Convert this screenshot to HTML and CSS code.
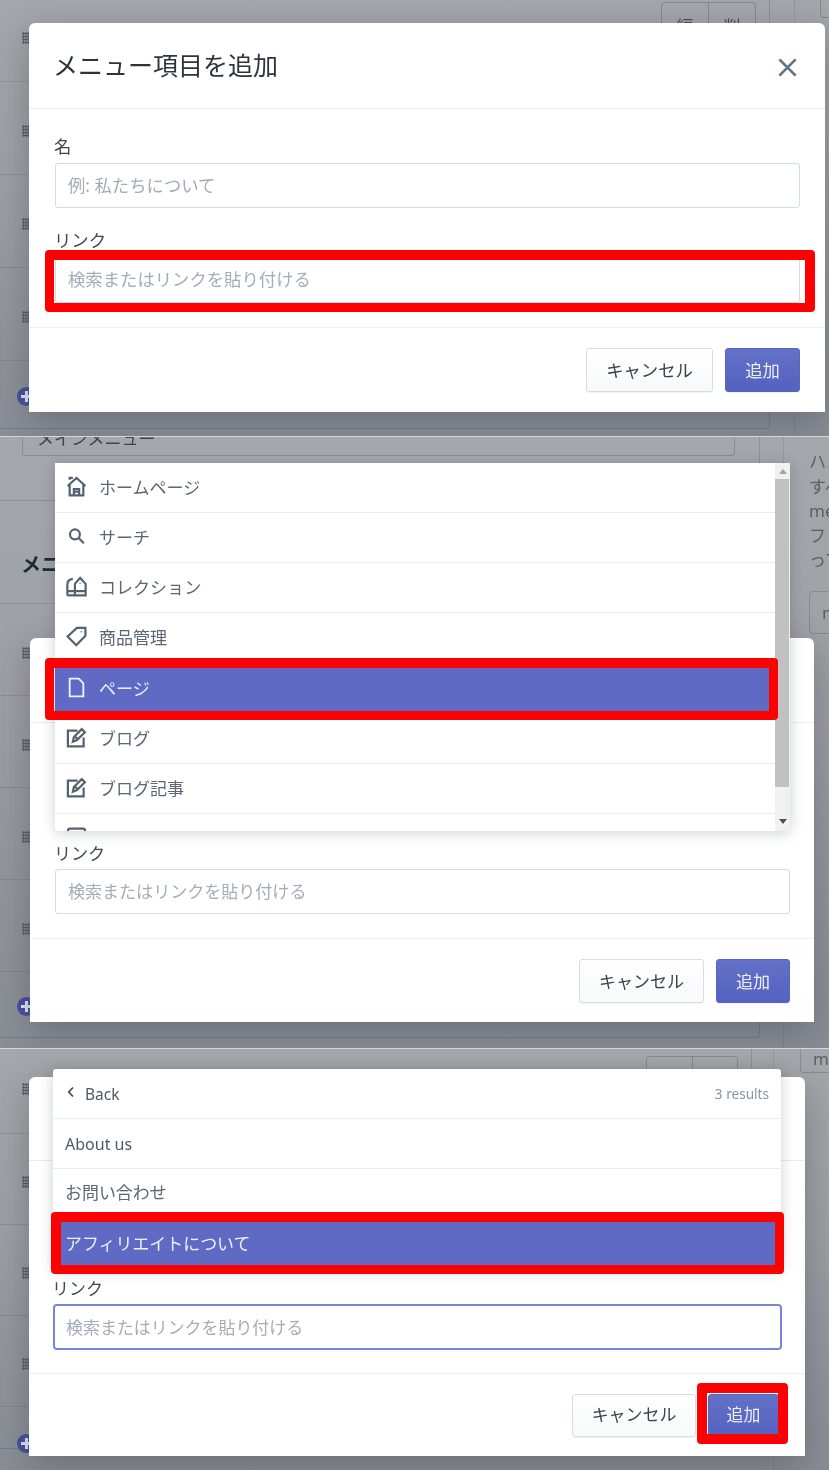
FILE: index.html
```html
<!DOCTYPE html>
<html lang="ja">
<head>
<meta charset="utf-8">
<title>メニュー項目を追加</title>
<link rel="stylesheet" href="styles.css">
</head>
<body>
<svg class="defs" width="0" height="0" aria-hidden="true">
  <symbol id="i-home" viewBox="0 0 20 20"><path d="M1.500 9.500 10 1.800l8.500 7.700M3.500 3.500V1.800h3M3.500 8v10.500h13V8M7.500 18.500v-6h5v6M7.500 15h5"/></symbol>
  <symbol id="i-search" viewBox="0 0 20 20"><circle cx="8.500" cy="8" r="4.700"/><path d="m12 11.500 5 5" class="thick"/></symbol>
  <symbol id="i-coll" viewBox="0 0 20 20"><path d="M1.300 18.500V8C1.300 5 3.500 3.200 6.500 2.800M8.500 18.500V7.500l5-5.700 5.200 5.700v11zM1.300 14.500h17.400M1.300 18.500h17.400M13.500 6.500v.7"/></symbol>
  <symbol id="i-tag" viewBox="0 0 20 20"><path d="M18.500 1.800v7.600l-8.700 8.900L1.500 10l8.900-8.200zM14.600 5.300v.6"/></symbol>
  <symbol id="i-page" viewBox="0 0 20 20"><path d="M3.500 1.500h8.700l4.300 4.600v12.400h-13z"/></symbol>
  <symbol id="i-blog" viewBox="0 0 20 20"><path d="M11 3.500H1.800v15h15V10M6.500 14l1-4.500L15 2l3 3-7.500 7.500zM8.500 9l2.500 2.500"/></symbol>
  <symbol id="i-box" viewBox="0 0 20 20"><rect x="2" y="1.500" width="16" height="17" rx="1.500"/></symbol>
</svg>

<section class="panel panel-a">
  <div class="bg">
    <div class="card card-a">
      <div class="row row-first"><span class="grip"></span><span class="spacer"></span><span class="btn-group"><span>編集</span><span>削除</span></span></div>
      <div class="row"><span class="grip"></span></div>
      <div class="row"><span class="grip"></span></div>
      <div class="row"><span class="grip"></span></div>
      <div class="row row-add"><span class="plus"></span></div>
    </div>
    <aside class="side side-a"><span class="side-box"></span></aside>
  </div>
  <div class="modal">
    <header class="modal-head"><h2>メニュー項目を追加</h2>
      <svg class="close" viewBox="0 0 20 20"><path d="M3.500 3.500l13 13M16.500 3.500l-13 13"/></svg></header>
    <div class="modal-body">
      <label>名</label><div class="input">例: 私たちについて</div>
      <label class="second">リンク</label><div class="input tall">検索またはリンクを貼り付ける</div>
    </div>
    <footer class="modal-foot"><span class="btn">キャンセル</span><span class="btn primary">追加</span></footer>
  </div>
  <div class="mark mark-a"></div>
</section>

<section class="panel panel-b">
  <div class="bg">
    <div class="main">
      <div class="card strip"><div class="ghost-input">メインメニュー</div></div>
      <div class="card card-b">
        <h3>メニュー項目</h3>
        <div class="row"><span class="grip"></span></div>
        <div class="row"><span class="grip"></span></div>
        <div class="row"><span class="grip"></span></div>
        <div class="row"><span class="grip"></span></div>
        <div class="row row-add"><span class="plus"></span></div>
      </div>
    </div>
    <aside class="side side-b">
      <p>ハンドル</p><p>すべて</p><p>menu</p><p>フッター</p><p>って</p>
      <span class="side-btn">main</span>
    </aside>
  </div>
  <div class="modal">
    <header class="modal-head"><h2 class="covered">メニュー項目を追加</h2></header>
    <div class="modal-body">
      <label class="covered">名</label><div class="input covered">例: 私たちについて</div>
      <label class="second">リンク</label><div class="input near">検索またはリンクを貼り付ける</div>
    </div>
    <footer class="modal-foot"><span class="btn">キャンセル</span><span class="btn primary">追加</span></footer>
  </div>
  <div class="dropdown">
    <ul class="list">
      <li><svg class="ico"><use href="#i-home"/></svg>ホームページ</li>
      <li><svg class="ico"><use href="#i-search"/></svg>サーチ</li>
      <li><svg class="ico"><use href="#i-coll"/></svg>コレクション</li>
      <li><svg class="ico"><use href="#i-tag"/></svg>商品管理</li>
      <li class="active"><svg class="ico"><use href="#i-page"/></svg>ページ</li>
      <li><svg class="ico"><use href="#i-blog"/></svg>ブログ</li>
      <li><svg class="ico"><use href="#i-blog"/></svg>ブログ記事</li>
      <li><svg class="ico"><use href="#i-box"/></svg></li>
    </ul>
    <div class="scrollbar"><span class="arrow up"></span><span class="thumb"></span><span class="arrow down"></span></div>
  </div>
  <div class="mark mark-b"></div>
</section>

<section class="panel panel-c">
  <div class="bg">
    <div class="card card-c">
      <div class="row row-first"><span class="grip"></span><span class="spacer"></span><span class="btn-group"><span></span><span></span></span></div>
      <div class="row"><span class="grip"></span></div>
      <div class="row"><span class="grip"></span></div>
      <div class="row"><span class="grip"></span></div>
      <div class="row row-add"><span class="plus"></span></div>
    </div>
    <aside class="side side-c"><span class="side-btn">main</span></aside>
  </div>
  <div class="modal">
    <header class="modal-head"><h2 class="covered">メニュー項目を追加</h2></header>
    <div class="modal-body">
      <label class="covered">名</label><div class="input covered">例: 私たちについて</div>
      <label class="second">リンク</label><div class="input tall focus">検索またはリンクを貼り付ける</div>
    </div>
    <footer class="modal-foot"><span class="btn">キャンセル</span><span class="btn primary">追加</span></footer>
  </div>
  <div class="dropdown">
    <ul class="list">
      <li class="back"><svg class="chev" viewBox="0 0 10 14"><path d="M7 2.500 2.800 7 7 11.500"/></svg><span>Back</span><em>3 results</em></li>
      <li class="latin">About us</li>
      <li class="contact">お問い合わせ</li>
      <li class="active">アフィリエイトについて</li>
    </ul>
  </div>
  <div class="mark mark-c1"></div>
  <div class="mark mark-c2"></div>
</section>
</body>
</html>
```
FILE: styles.css
```css
* { box-sizing: border-box; }
html, body { margin: 0; padding: 0; }
body {
  width: 829px;
  height: 1470px;
  overflow: hidden;
  background: #8b8f96;
  font-family: "Noto Sans", "Noto Sans CJK JP", sans-serif;
  color: #212b36;
  filter: blur(.35px);
}
.defs { position: absolute; }
.covered { visibility: hidden; }

/* panels: three stacked captures */
.panel {
  position: relative;
  overflow: hidden;
  font-size: var(--fs);
  background: linear-gradient(180deg, #a4a7ab 0%, #9c9fa4 45%, #898d94 100%);
}
.panel-a { height: 436px; --fs: 17.35px; }
.panel-b { height: 612px; --fs: 17.05px; border-top: 1px solid #d3d5d8; }
.panel-c { height: 422px; --fs: 16.95px; border-top: 1px solid #d3d5d8; }

/* dimmed page behind the dialogs */
.bg { display: flex; align-items: flex-start; }
.card { border: 1px solid rgba(60, 66, 74, .22); border-left: 0; border-top: 0; border-radius: 0 0 4px 0; }
.row {
  display: flex;
  align-items: center;
  height: 93px;
  padding: 6px 0 0 22px;
  border-bottom: 1px solid rgba(60, 66, 74, .16);
}
.row-first { height: 82px; padding: 0 13px 6px 22px; }
.row-add { border-bottom: 0; height: 68px; padding: 2px 0 0 17px; }
.spacer { flex: 1; }
.grip {
  width: 8px;
  height: 12px;
  background: radial-gradient(circle, #5a6169 1.100px, transparent 1.400px) 0 0 / 2.700px 3px;
}
.plus {
  position: relative;
  width: 19px;
  height: 19px;
  border-radius: 50%;
  background: #46519f;
}
.plus::before, .plus::after { content: ""; position: absolute; background: #e3e5f2; }
.plus::before { left: 4px; right: 4px; top: 8px; height: 3px; }
.plus::after { top: 4px; bottom: 4px; left: 8px; width: 3px; }
.btn-group {
  align-self: flex-start;
  display: flex;
  width: 95px;
  height: 56px;
  margin-top: 2px;
  border: 1px solid rgba(60, 66, 74, .3);
  border-radius: 4px;
  font-size: 17px;
  color: #4a5058;
}
.btn-group span { flex: 1; padding: 12px 14px 0; text-align: center; line-height: 24px; }
.btn-group span + span { border-left: 1px solid rgba(60, 66, 74, .3); }

.card-a { width: 770px; height: 429px; }
.side { flex: 1; min-width: 0; overflow: hidden; border-left: 1px solid rgba(60, 66, 74, .14); color: #5a6068; }
.side-a { margin-left: 24px; height: 436px; }
.side-box { display: block; width: 40px; height: 18px; margin-left: 25px; border: 1px solid rgba(60, 66, 74, .3); border-top: 0; border-radius: 0 0 4px 4px; }

.main { width: 760px; }
.strip {
  display: flex;
  flex-direction: column;
  justify-content: flex-end;
  height: 64px;
  overflow: hidden;
  padding: 0 24px 44px 22px;
}
.ghost-input {
  flex: none;
  height: 40px;
  padding: 0 14px;
  line-height: 43px;
  border: 1px solid rgba(60, 66, 74, .25);
  border-radius: 3px;
  font-size: 17px;
  color: #3e444c;
}
.card-b { margin-top: 23px; height: 514px; }
.card-b h3 { margin: 0; height: 80px; padding: 27px 0 0 21px; font-size: 20px; line-height: 28px; border-bottom: 1px solid rgba(60, 66, 74, .16); }
.card-b .row { height: 92px; }
.card-b .row-add { height: 66px; }
.side-b { margin-left: 23px; padding: 13px 0 0 25px; height: 611px; white-space: nowrap; }
.side-b p { margin: 0; font-size: 17px; line-height: 24.500px; }
.side-btn { display: block; width: 60px; height: 43px; padding: 9px 12px; font-size: 17px; border: 1px solid rgba(60, 66, 74, .25); border-radius: 4px; }
.side-b .side-btn { margin-top: 18px; }

.card-c { width: 752px; height: 400px; }
.card-c .row { height: 91px; }
.card-c .row-first { height: 85px; padding-bottom: 4px; }
.card-c .btn-group { width: 92px; margin-top: 7px; }
.card-c .row-add { height: 60px; padding-top: 12px; }
.side-c { margin-left: 21px; height: 422px; padding-left: 26px; }
.side-c .side-btn { height: 24px; padding: 0 12px; line-height: 20px; border-top: 0; border-radius: 0 0 4px 4px; }

/* dialog */
.modal {
  position: absolute;
  display: flex;
  flex-direction: column;
  background: #fff;
  border-radius: 6px 6px 0 0;
  box-shadow: 0 10px 36px rgba(40, 44, 52, .32);
}
.modal-head {
  display: flex;
  align-items: center;
  justify-content: space-between;
  padding: 0 25px;
  border-bottom: 1px solid #e9ecef;
}
.modal-head h2 { margin: 0 0 4px -1px; font-size: 25px; font-weight: 400; color: #2c343d; }
.close { width: 25px; height: 25px; margin-top: 3px; fill: none; stroke: #637381; stroke-width: 2.200; }
.modal-body { padding-left: var(--pad); padding-right: var(--pad-r); }
.modal-body label { display: block; height: 24px; margin-left: -1px; line-height: 24px; color: #3f4953; }
.input {
  display: flex;
  align-items: center;
  height: 45px;
  margin-top: var(--lg);
  padding: 0 12px 2px;
  background: #fff;
  border: 1px solid #d5dbe2;
  border-radius: 3px;
  color: #a3adb8;
}
.input.tall { height: 46px; }
.input.near { margin-top: 3px; }
.input.focus { margin-top: 3px; border: 2px solid #7a84d6; border-radius: 4px; padding: 0 11px 2px; }
.second { margin-top: var(--gap); }
.modal-foot {
  display: flex;
  justify-content: flex-end;
  gap: var(--btn-gap);
  border-top: 1px solid #eef0f2;
}
.btn {
  display: flex;
  align-items: center;
  justify-content: center;
  height: 44px;
  padding-bottom: 2px;
  background: linear-gradient(180deg, #fff, #f8f9fa);
  border: 1px solid #d8dde2;
  border-radius: 3px;
  box-shadow: 0 1px 0 rgba(22, 29, 37, .05);
  color: #3a434c;
}
.btn.primary { border-color: #5664c2; background: linear-gradient(180deg, #6371c7, #5462c0); color: #eceefa; }

.panel-a .modal { left: 29px; top: 23px; width: 796px; height: 389px; --pad: 26px; --pad-r: 25px; --lg: 5px; --gap: 20px; --btn-gap: 12px; }
.panel-a .modal-head { flex: none; height: 86px; }
.panel-a .modal-body { padding-top: 25px; padding-bottom: 24px; }
.panel-a .input.tall { padding-bottom: 4px; }
.panel-a .modal-foot { padding: 20px 25px; }
.panel-a .btn { width: 127px; }
.panel-a .btn.primary { width: 75px; }

.panel-b .modal { left: 30px; top: 201px; width: 784px; height: 384px; --pad: 25px; --pad-r: 24px; --lg: 5px; --gap: 20px; --btn-gap: 12px; }
.panel-b .modal-head { flex: none; height: 85px; }
.panel-b .modal-body { padding-top: 25px; padding-bottom: 24px; }
.panel-b .modal-foot { padding: 20px 24px; }
.panel-b .btn { width: 125px; }
.panel-b .btn.primary { width: 74px; }

.panel-c .modal { left: 29px; top: 28px; width: 776px; height: 379px; --pad: 24px; --pad-r: 23px; --lg: 5px; --gap: 18px; --btn-gap: 12px; }
.panel-c .modal-head { flex: none; height: 84px; }
.panel-c .modal-body { padding-top: 24px; padding-bottom: 23px; }
.panel-c .modal-foot { padding: 20px 26px 19px 0; }
.panel-c .btn { width: 124px; height: 43px; padding-bottom: 4px; }
.panel-c .btn.primary { width: 71px; }

/* dropdown */
.dropdown {
  position: absolute;
  display: flex;
  overflow: hidden;
  background: #fff;
  border-radius: 0 0 3px 3px;
  box-shadow: 0 2px 14px rgba(33, 43, 54, .22);
}
.panel-b .dropdown { left: 55px; top: 26px; width: 735px; height: 368px; }
.panel-c .dropdown { left: 53px; top: 20px; width: 728px; height: 200px; border-radius: 3px 3px 0 0; }
.list { flex: 1; min-width: 0; margin: 0; padding: 0; list-style: none; color: #5b6772; }
.list li {
  display: flex;
  align-items: center;
  height: 50px;
  padding: 0 12px 2px;
  border-bottom: 1px solid #e9edf1;
}
.panel-b .list li.active { height: 51px; }
.list li.active { background: #5f6ac4; color: #eef0fb; border-bottom-color: #5f6ac4; }
.ico { flex: none; width: 21px; height: 21px; margin-right: 12px; margin-left: -1px; fill: none; stroke: #566270; stroke-width: 2.100; }
.ico .thick { stroke-width: 2.800; }
.active .ico { stroke: #eef0fb; stroke-width: 1.800; }
.list li.back { padding-bottom: 0; font-size: 15.500px; color: #4d5964; }
.back em { margin-left: auto; font-style: normal; font-size: 13.600px; color: #8794a3; }
.chev { width: 10px; height: 14px; margin: -4px 9px 0 1px; fill: none; stroke: #454f5b; stroke-width: 1.800; }
.list li.latin { padding-bottom: 0; font-size: 16px; color: #4d5964; }
.list li.contact { padding-bottom: 4px; }

.scrollbar { flex: none; display: flex; flex-direction: column; width: 15px; background: #f1f1f1; }
.thumb { flex: none; width: 14px; height: 308px; background: #c1c1c1; }
.arrow { flex: none; width: 0; height: 0; border-left: 4px solid transparent; border-right: 4px solid transparent; margin-left: 4px; }
.arrow.up { border-bottom: 5px solid #a3a3a3; margin-top: 6px; margin-bottom: 5px; }
.arrow.down { border-top: 5px solid #505050; margin-top: 32px; }

/* red annotation frames */
.mark { position: absolute; border: 10px solid #f00; border-radius: 4px; pointer-events: none; }
.mark-a { left: 45px; top: 250px; width: 770px; height: 62px; border-width: 10px 10px 9px 9px; }
.mark-b { left: 45px; top: 221px; width: 733px; height: 62px; border-width: 10px 9px 9px 9px; }
.mark-c1 { left: 51px; top: 163px; width: 733px; height: 62px; border-width: 10px 9px 9px 10px; }
.mark-c2 { left: 697px; top: 334px; width: 91px; height: 61px; border-width: 10px; }
```
